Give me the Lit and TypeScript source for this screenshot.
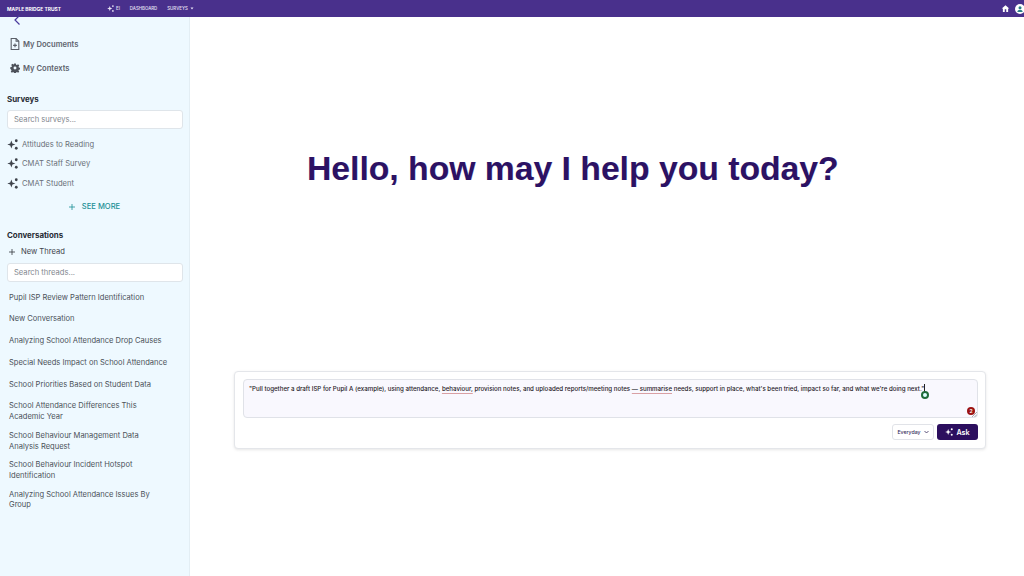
import { LitElement, html, css } from "lit";
import { customElement } from "lit/decorators.js";

const sparkle = (size: number, color: string) => html`<svg class="ic" width=${size} height=${size} viewBox="2.500 3 19 18" fill=${color}>
  <path d="M10 5l1.900 5.100L17 12l-5.100 1.900L10 19l-1.900-5.100L3 12l5.100-1.900z"/>
  <circle cx="18.500" cy="5.500" r="2.400"/><circle cx="18.500" cy="18.500" r="2.400"/></svg>`;
const plus = (size: number, color: string) => html`<svg class="ic" width=${size} height=${size} viewBox="0 0 24 24" fill="none" stroke=${color} stroke-width="2.400"><path d="M12 3v18M3 12h18"/></svg>`;

const threads = [
  "Pupil ISP Review Pattern Identification",
  "New Conversation",
  "Analyzing School Attendance Drop Causes",
  "Special Needs Impact on School Attendance",
  "School Priorities Based on Student Data",
  "School Attendance Differences This Academic Year",
  "School Behaviour Management Data Analysis Request",
  "School Behaviour Incident Hotspot Identification",
  "Analyzing School Attendance Issues By Group",
];

@customElement("app-root")
export class AppRoot extends LitElement {
  static styles = css`
    :host { display: block; width: 1024px; height: 576px; overflow: hidden; background: #fff; font-family: Inter, "Liberation Sans", sans-serif; }
    .ic { display: block; flex: none; }
    .top { height: 17px; background: #49308c; display: flex; align-items: center; padding: 0 0 0 7px; color: #e6e0f4; font-size: 4.4px; font-weight: 500; }
    .brand { width: 100px; font-weight: 700; color: #fff; font-size: 4.9px; white-space: nowrap; }
    .nav { display: flex; align-items: center; gap: 10px; }
    .nav span { display: flex; align-items: center; gap: 2px; white-space: nowrap; }
    .right { margin-left: auto; margin-right: -1px; display: flex; align-items: center; gap: 5px; }
    .avatar { width: 10px; height: 10px; border-radius: 50%; background: #fff; display: flex; align-items: center; justify-content: center; }
    .body { display: flex; height: 559px; }
    .side { width: 175px; flex: none; background: #eef9ff; border-right: 1px solid #e3eef4; padding: 0 7px; box-sizing: content-box; color: #40464f; }
    .back { height: 9px; padding-left: 6px; display: flex; align-items: flex-end; }
    .link { display: flex; align-items: center; gap: 3px; height: 24px; font-size: 7.6px; font-weight: 600; color: #5e646e; padding-left: 3px; }
    .link1 { margin-top: 6px; }
    h3 { margin: 0; font-size: 7.9px; font-weight: 700; color: #272b33; line-height: 12px; }
    .h-s { margin-top: 13px; }
    .search { box-sizing: border-box; height: 19px; margin-top: 5px; background: #fff; border: 1px solid #dfe5ea; border-radius: 3px; display: flex; align-items: center; padding-left: 6px; font-size: 7.6px; color: #83888f; width: 176px; }
    .survey { display: flex; align-items: center; gap: 4px; height: 19.500px; font-size: 7.6px; color: #6a7078; }
    .surveys { margin-top: 5.500px; }
    .more { display: flex; align-items: center; justify-content: center; gap: 6px; color: #1b8f96; font-size: 7.6px; font-weight: 500; height: 20px; margin-top: 3.500px; padding-right: 1px; }
    .h-c { margin-top: 12px; }
    .new { display: flex; align-items: center; gap: 5px; font-size: 7.6px; color: #3f444c; height: 14px; margin-top: 4px; padding-left: 1px; }
    .s2 { margin-top: 4px; }
    .threads { margin-top: 11px; padding-left: 2px; width: 160.500px; }
    .thread { font-size: 7.55px; line-height: 10.700px; color: #4b5159; min-height: 21.800px; padding-bottom: 8px; box-sizing: border-box; }
    .main { flex: 1; display: flex; flex-direction: column; }
    h1 { margin: 130px 0 0 117px; font-family: "Liberation Sans", Arial, sans-serif; font-weight: 700; font-size: 33.700px; line-height: 42px; color: #2c1263; text-shadow: 0.5px 0 0 rgba(70,60,180,.25); white-space: nowrap; }
    .card { box-sizing: border-box; width: 752px; height: 78px; margin: 182px 0 0 44px; background: #fff; border: 1px solid #e4e6ea; border-radius: 4px; box-shadow: 0 1px 3px rgba(0,0,0,.1); padding: 7px 7px 0 8px; }
    .input { box-sizing: border-box; position: relative; height: 39px; background: #f9f8fe; border: 1px solid #e0e2e8; border-radius: 4px; padding: 4px 5px; font-size: 6.16px; font-weight: 500; line-height: 10px; color: #1f2026; white-space: nowrap; }
    .sp { text-decoration: underline; text-decoration-color: #d9a0a4; text-underline-offset: 1.500px; }
    .caret { display: inline-block; width: 1px; height: 8px; background: #222; vertical-align: -1px; }
    .g { position: absolute; left: 677px; top: 11px; width: 4px; height: 4px; border: 2px solid #1f6b3a; border-radius: 50%; background: #dff; }
    .r { position: absolute; right: 2px; bottom: 2px; width: 8px; height: 8px; border-radius: 50%; background: #9c1212; color: #fff; font-size: 5px; line-height: 8px; text-align: center; font-weight: 700; }
    .grip { position: absolute; right: 0; bottom: 0; }
    .actions { display: flex; justify-content: flex-end; gap: 3px; margin-top: 6px; }
    .sel { box-sizing: border-box; width: 42px; height: 16px; border: 1px solid #e1e3e8; border-radius: 3px; background: #fff; display: flex; align-items: center; justify-content: center; gap: 3px; color: #352a5a; font-size: 5.200px; font-weight: 500; }
    .ask { box-sizing: border-box; width: 41px; height: 16px; border-radius: 3px; background: #2c0f5e; color: #fff; display: flex; align-items: center; justify-content: center; gap: 3px; font-size: 7.200px; font-weight: 600; }
  `;

  render() {
    return html`
      <div class="top">
        <div class="brand">MAPLE BRIDGE TRUST</div>
        <div class="nav">
          <span>${sparkle(7, "#e6e0f4")}EI</span>
          <span>DASHBOARD</span>
          <span>SURVEYS <svg width="4" height="3" viewBox="0 0 4 3"><path d="M.5 .5h3L2 2.500z" fill="#e6e0f4"/></svg></span>
        </div>
        <div class="right">
          <svg class="ic" width="9" height="9" viewBox="0 0 24 24" fill="#fff"><path d="M10 21v-7h4v7h5v-9h3L12 3 2 12h3v9z"/></svg>
          <div class="avatar"><svg class="ic" width="8" height="8" viewBox="0 0 24 24" fill="#2a7f86"><circle cx="12" cy="8" r="4.500"/><path d="M4 21c0-5 4-7 8-7s8 2 8 7z"/></svg></div>
        </div>
      </div>
      <div class="body">
        <aside class="side">
          <div class="back"><svg class="ic" width="9" height="11" viewBox="0 0 9 11" fill="none" stroke="#4a3a9c" stroke-width="1.200"><path d="M6.500 .5L2 5l4.500 4.500"/></svg></div>
          <div class="link link1">
            <svg class="ic" width="10" height="12" viewBox="3 1 18 22" fill="none" stroke="#5a5f68" stroke-width="2"><path d="M5 2h9l5 5v15H5z"/><path d="M14 2v5h5M12 11v7M8.500 14.500h7"/></svg>
            My Documents</div>
          <div class="link">
            <svg class="ic" width="10" height="10" viewBox="0 0 24 24" fill="#4d525a"><path fill-rule="evenodd" d="M10 1h4l.7 3.200 2 .8 2.700-1.800 2.800 2.800-1.800 2.700.8 2 3.200.7v4l-3.200.7-.8 2 1.800 2.700-2.800 2.800-2.700-1.800-2 .8-.7 3.200h-4l-.7-3.200-2-.8-2.700 1.800-2.800-2.800 1.800-2.700-.8-2L.6 14v-4l3.200-.7.8-2-1.800-2.700 2.800-2.800L8.300 3.600l1-.4zM12 8.500a3.500 3.500 0 100 7 3.500 3.500 0 000-7z"/></svg>
            My Contexts</div>
          <h3 class="h-s">Surveys</h3>
          <div class="search">Search surveys...</div>
          <div class="surveys">
            <div class="survey">${sparkle(11, "#3e434b")}Attitudes to Reading</div>
            <div class="survey">${sparkle(11, "#3e434b")}CMAT Staff Survey</div>
            <div class="survey">${sparkle(11, "#3e434b")}CMAT Student</div>
          </div>
          <div class="more">${plus(8, "#1b8f96")}SEE MORE</div>
          <h3 class="h-c">Conversations</h3>
          <div class="new">${plus(8, "#33373e")}New Thread</div>
          <div class="search s2">Search threads...</div>
          <div class="threads">${threads.map((t) => html`<div class="thread">${t}</div>`)}</div>
        </aside>
        <main class="main">
          <h1>Hello, how may I help you today?</h1>
          <div class="card">
            <div class="input">"Pull together a draft ISP for Pupil A (example), using attendance, <span class="sp">behaviour,</span> provision notes, and uploaded reports/meeting notes <span class="sp">— summarise</span> needs, support in place, what's been tried, impact so far, and what we're doing next."<span class="caret"></span>
              <div class="g"></div>
              <div class="r">2</div>
              <svg class="grip" width="5" height="5" viewBox="0 0 5 5" stroke="#777" stroke-width=".6"><path d="M0 5l5-5M2.500 5L5 2.500"/></svg>
            </div>
            <div class="actions">
              <div class="sel">Everyday <svg width="5" height="4" viewBox="0 0 5 4" fill="none" stroke="#352a5a" stroke-width=".8"><path d="M.5 1l2 2 2-2"/></svg></div>
              <div class="ask">${sparkle(8, "#fff")}Ask</div>
            </div>
          </div>
        </main>
      </div>
    `;
  }
}
